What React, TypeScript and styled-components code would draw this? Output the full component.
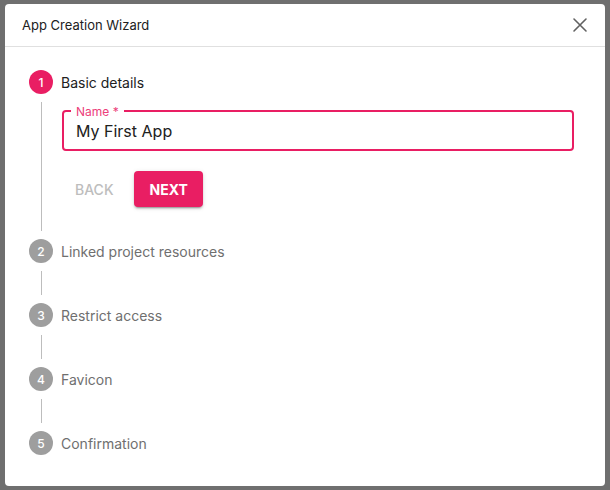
import styled, { createGlobalStyle } from "styled-components";

const GlobalStyle = createGlobalStyle`
  html, body {
    margin: 0;
    padding: 0;
    background: #6f6f6f;
    font-family: Inter, "Noto Sans", sans-serif;
  }
`;

const steps = [
  "Basic details",
  "Linked project resources",
  "Restrict access",
  "Favicon",
  "Confirmation",
];

const App = () => {
  return (
    <>
      <GlobalStyle />
      <Backdrop>
        <Dialog>
          <Header>
            <Title>App Creation Wizard</Title>
            <CloseButton aria-label="close">
              <svg width="20" height="20" viewBox="0 0 20 20">
                <path
                  d="M4 4 L16 16 M16 4 L4 16"
                  stroke="#616161"
                  strokeWidth="1.6"
                  strokeLinecap="round"
                />
              </svg>
            </CloseButton>
          </Header>
          <Body>
            {steps.map((label, index) => (
              <Step key={label}>
                {index > 0 && <Connector />}
                <StepLabel>
                  <StepIcon $active={index === 0}>{index + 1}</StepIcon>
                  <LabelText $active={index === 0}>{label}</LabelText>
                </StepLabel>
                {index === 0 && (
                  <StepContent>
                    <Field>
                      <FieldLabel>Name *</FieldLabel>
                      <Input defaultValue="My First App" />
                    </Field>
                    <Actions>
                      <BackButton disabled>Back</BackButton>
                      <NextButton>Next</NextButton>
                    </Actions>
                  </StepContent>
                )}
              </Step>
            ))}
          </Body>
        </Dialog>
      </Backdrop>
    </>
  );
};

const Backdrop = styled.div`
  width: 610px;
  height: 490px;
  padding: 4px 0 0 5px;
  box-sizing: border-box;
`;

const Dialog = styled.div`
  width: 600px;
  height: 482px;
  background: #fff;
  border-radius: 4px;
  box-sizing: border-box;
  display: flex;
  flex-direction: column;
  overflow: hidden;
`;

const Header = styled.div`
  flex-shrink: 0;
  height: 43px;
  box-sizing: border-box;
  border-bottom: 1px solid #e0e0e0;
  display: flex;
  align-items: center;
  justify-content: space-between;
  padding: 0 15px 0 17px;
`;

const Title = styled.h2`
  margin: 0;
  font-size: 13px;
  font-weight: 400;
  color: #212121;
`;

const CloseButton = styled.button`
  border: 0;
  background: none;
  padding: 0;
  display: flex;
  cursor: pointer;
`;

const Body = styled.div`
  padding: 15px 31px 16px 24px;
  display: flex;
  flex-direction: column;
`;

const Step = styled.div`
  display: flex;
  flex-direction: column;
`;

const Connector = styled.div`
  margin-left: 12px;
  height: 24px;
  border-left: 1px solid #bdbdbd;
`;

const StepLabel = styled.div`
  display: flex;
  align-items: center;
  gap: 8px;
  padding: 8px 0;
`;

const StepIcon = styled.div<{ $active: boolean }>`
  width: 24px;
  height: 24px;
  border-radius: 50%;
  background: ${(p) => (p.$active ? "#e91e63" : "#9e9e9e")};
  color: #fff;
  font-size: 12px;
  font-weight: 500;
  display: flex;
  align-items: center;
  justify-content: center;
`;

const LabelText = styled.span<{ $active: boolean }>`
  font-size: 14px;
  color: ${(p) => (p.$active ? "#212121" : "#6f6f6f")};
`;

const StepContent = styled.div`
  margin-left: 12px;
  border-left: 1px solid #bdbdbd;
  padding: 8px 0 0 20px;
  display: flex;
  flex-direction: column;
  gap: 20px;
`;

const Field = styled.div`
  position: relative;
  height: 41px;
  border: 2px solid #e91e63;
  border-radius: 4px;
  box-sizing: border-box;
  display: flex;
  align-items: center;
`;

const FieldLabel = styled.span`
  position: absolute;
  top: -7px;
  left: 7px;
  padding: 0 5px;
  background: #fff;
  font-size: 12px;
  line-height: 14px;
  color: #ec407a;
`;

const Input = styled.input`
  border: 0;
  outline: none;
  width: 100%;
  padding: 0 12px;
  font-family: Inter, "Noto Sans", sans-serif;
  font-size: 16px;
  color: #212121;
  background: transparent;
`;

const Actions = styled.div`
  display: flex;
  align-items: center;
  gap: 7px;
`;

const BaseButton = styled.button`
  height: 36px;
  border: 0;
  border-radius: 4px;
  font-family: Inter, "Noto Sans", sans-serif;
  font-size: 14px;
  text-transform: uppercase;
  padding: 0 16px;
`;

const BackButton = styled(BaseButton)`
  background: transparent;
  color: #bdbdbd;
  font-weight: 500;
  padding: 0 13px;
`;

const NextButton = styled(BaseButton)`
  background: #e91e63;
  color: #fff;
  font-weight: 700;
  width: 69px;
  box-shadow: 0 3px 1px -2px rgba(0, 0, 0, 0.2), 0 2px 2px 0 rgba(0, 0, 0, 0.14),
    0 1px 5px 0 rgba(0, 0, 0, 0.12);
`;

export default App;
